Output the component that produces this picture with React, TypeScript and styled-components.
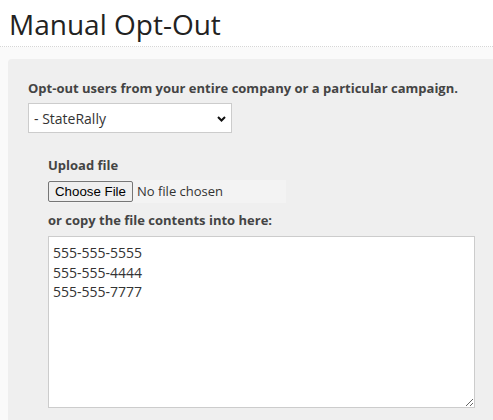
import React from "react";
import styled, { createGlobalStyle } from "styled-components";

const GlobalStyle = createGlobalStyle`
  html, body {
    margin: 0;
    padding: 0;
    background: #ffffff;
    font-family: "Open Sans", "Liberation Sans", sans-serif;
    color: #333333;
  }
`;

const Page = styled.div`
  width: 493px;
  height: 420px;
  overflow: hidden;
  background: #ffffff;
`;

const Header = styled.div`
  padding: 5px 0 0 9px;
  height: 47px;
  box-sizing: border-box;
  border-bottom: 1px dotted #d6d6d6;
`;

const Title = styled.h1`
  margin: 0;
  font-size: 28px;
  font-weight: 400;
  line-height: 38px;
  color: #222222;
`;

const Body = styled.div`
  background: #fafafa;
  padding: 12px 0 0 8px;
`;

const Panel = styled.div`
  background: #efefef;
  border-radius: 4px 0 0 0;
  padding: 20px 0 20px 20px;
  min-height: 400px;
`;

const Label = styled.div`
  font-size: 13px;
  font-weight: 700;
  color: #444444;
  line-height: 18px;
`;

const SelectWrap = styled.div`
  position: relative;
  margin-top: 6px;
  width: 204px;
  height: 30px;
`;

const Select = styled.select`
  display: block;
  appearance: none;
  -webkit-appearance: none;
  width: 100%;
  height: 100%;
  border: 1px solid #cccccc;
  border-radius: 0;
  background: #ffffff;
  font-family: "Open Sans", "Liberation Sans", sans-serif;
  font-size: 14px;
  color: #333333;
  padding: 0 24px 0 5px;
  outline: none;
`;

/* chevron drawn over the native select */
const Chevron = styled.svg`
  position: absolute;
  right: 6px;
  top: 13px;
  width: 9px;
  height: 6px;
  pointer-events: none;
`;

const Indented = styled.div`
  margin-left: 20px;
  padding-top: 23px;
  display: flex;
  flex-direction: column;
  align-items: flex-start;
`;

const FileInput = styled.input`
  margin-top: 6px;
  width: 238px;
  height: 23px;
  padding: 0;
  background: #f3f3f3;
  font-family: "Open Sans", "Liberation Sans", sans-serif;
  font-size: 13px;
  color: #333333;

  &::file-selector-button {
    font-family: "Liberation Sans", Arial, sans-serif;
    font-size: 13.3px;
    color: #000000;
    background: #efefef;
    border: 1px solid #767676;
    border-radius: 2px;
    padding: 1px 6px;
    height: 21px;
    margin: 1px 4px 1px 0;
  }
`;

const SubLabel = styled(Label)`
  margin-top: 8px;
`;

const TextArea = styled.textarea`
  margin-top: 7px;
  width: 427px;
  height: 172px;
  box-sizing: border-box;
  border: 1px solid #cccccc;
  background: #ffffff;
  padding: 6px 4px;
  font-family: "Open Sans", "Liberation Sans", sans-serif;
  font-size: 14px;
  line-height: 19.6px;
  color: #333333;
  resize: both;
  outline: none;
`;

export default function App() {
  return (
    <Page>
      <GlobalStyle />
      <Header>
        <Title>Manual Opt-Out</Title>
      </Header>
      <Body>
        <Panel>
          <Label>Opt-out users from your entire company or a particular campaign.</Label>
          <SelectWrap>
            <Select defaultValue="staterally">
              <option value="company">Entire company</option>
              <option value="staterally">- StateRally</option>
            </Select>
            <Chevron viewBox="0 0 9 6">
              <path d="M1 1 L4.5 4.5 L8 1" fill="none" stroke="#111" strokeWidth="2" />
            </Chevron>
          </SelectWrap>
          <Indented>
            <Label>Upload file</Label>
            <FileInput type="file" />
            <SubLabel>or copy the file contents into here:</SubLabel>
            <TextArea defaultValue={"555-555-5555\n555-555-4444\n555-555-7777"} />
          </Indented>
        </Panel>
      </Body>
    </Page>
  );
}
